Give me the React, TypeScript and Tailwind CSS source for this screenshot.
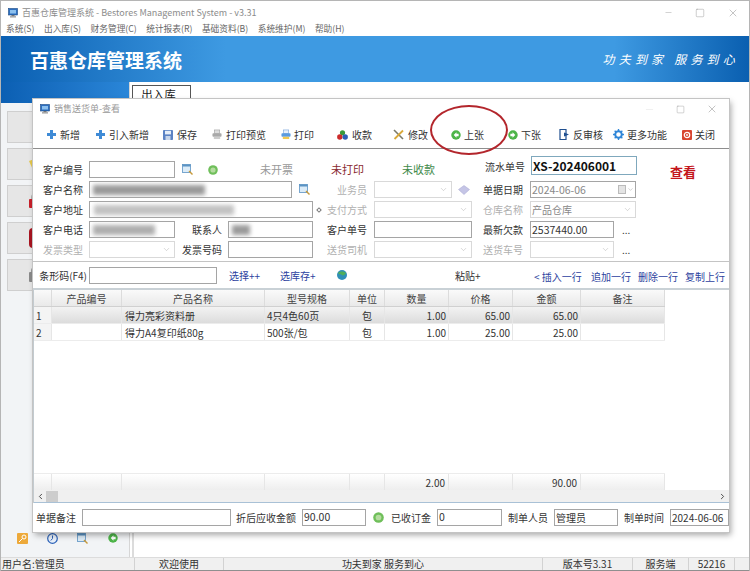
import type { ReactNode } from "react";
import { ChevronDown, ChevronLeft, ChevronRight, Minus, Square, X } from "lucide-react";

const font = { fontFamily: '"Noto Sans CJK SC", "Noto Sans", sans-serif' };

const gridCols =
  "grid grid-cols-[18px_70px_143px_85px_35px_64px_64px_68px_84px] w-[631px]";

const menus = ["系统(S)", "出入库(S)", "财务管理(C)", "统计报表(R)", "基础资料(B)", "系统维护(M)", "帮助(H)"];

function AppIcon() {
  return (
    <svg width="10" height="10" viewBox="0 0 10 10" className="shrink-0">
      <rect x="0.5" y="0.5" width="9" height="6.5" fill="#2d6fc0" stroke="#1b4a86" strokeWidth="0.6" />
      <rect x="2" y="2" width="6" height="3.5" fill="#8cc0ee" />
      <rect x="3.5" y="7" width="3" height="1.2" fill="#777" />
      <rect x="2" y="8.2" width="6" height="1.3" fill="#999" />
    </svg>
  );
}

function PlusIcon() {
  return (
    <svg width="9" height="9" viewBox="0 0 9 9">
      <path d="M3 0h3v3h3v3H6v3H3V6H0V3h3z" fill="#3f8bd6" />
    </svg>
  );
}

function SaveIcon() {
  return (
    <svg width="10" height="10" viewBox="0 0 10 10">
      <rect width="10" height="10" rx="0.8" fill="#5c83c4" />
      <rect x="2" y="0.8" width="6" height="3.6" fill="#e6eef8" />
      <rect x="2.5" y="6" width="5" height="4" fill="#c8d6ea" />
    </svg>
  );
}

function PrintIcon({ preview }: { preview?: boolean }) {
  return (
    <svg width="10" height="11" viewBox="0 0 11 11">
      <rect x="2.5" y="0.5" width="6" height="4" fill={preview ? "#ddd" : "#e8f0fa"} stroke={preview ? "#999" : "#6a9ad6"} strokeWidth="0.6" />
      <rect x="0.5" y="4" width="10" height="4" rx="1" fill={preview ? "#a9a9a9" : "#5a9be0"} />
      <rect x="2" y="8" width="7" height="2.5" fill={preview ? "#ccc" : "#f0c850"} />
    </svg>
  );
}

function BallsIcon() {
  return (
    <svg width="11" height="10" viewBox="0 0 11 10">
      <circle cx="5.5" cy="2.8" r="2.6" fill="#3a9a3c" />
      <circle cx="2.8" cy="7" r="2.7" fill="#cc2b2b" />
      <circle cx="8.2" cy="7" r="2.7" fill="#2d5fb8" />
    </svg>
  );
}

function ToolsIcon() {
  return (
    <svg width="11" height="11" viewBox="0 0 11 11">
      <path d="M1 1l9 9" stroke="#7a7a6a" strokeWidth="1.6" />
      <path d="M10 1.5L1.5 10" stroke="#d9a93a" strokeWidth="1.8" />
    </svg>
  );
}

function ArrowIcon({ dir }: { dir: "left" | "right" }) {
  return (
    <svg width="10" height="10" viewBox="0 0 11 11" className="shrink-0">
      <circle cx="5.5" cy="5.5" r="5.2" fill="#4db548" />
      <path
        d={dir === "left" ? "M6 2.5L3 5.5l3 3V6.8h2.4V4.2H6z" : "M5 2.5l3 3-3 3V6.8H2.6V4.2H5z"}
        fill="#fff"
      />
    </svg>
  );
}

function AuditIcon() {
  return (
    <svg width="11" height="11" viewBox="0 0 11 11">
      <path d="M1 .5h6v10H1z" fill="#fff" stroke="#1f4f8f" strokeWidth="1.2" />
      <path d="M5 3.5l5 2-5 2z" fill="#1f4f8f" />
    </svg>
  );
}

function GearIcon() {
  return (
    <svg width="11" height="11" viewBox="0 0 12 12">
      <circle cx="6" cy="6" r="3.6" fill="none" stroke="#2f86d8" strokeWidth="2.2" />
      <path d="M6 0v2.4M6 9.6V12M0 6h2.4M9.6 6H12M1.8 1.8l1.7 1.7M8.5 8.5l1.7 1.7M10.2 1.8L8.5 3.5M3.5 8.5l-1.7 1.7" stroke="#2f86d8" strokeWidth="1.5" />
    </svg>
  );
}

function CloseIcon() {
  return (
    <svg width="10" height="10" viewBox="0 0 10 10">
      <rect width="10" height="10" rx="1" fill="#d8452f" />
      <circle cx="5" cy="5" r="2.7" fill="none" stroke="#fff" strokeWidth="1.2" />
      <circle cx="5" cy="5" r="0.9" fill="#fff" />
    </svg>
  );
}

function SearchIcon() {
  return (
    <svg width="11" height="11" viewBox="0 0 11 11" className="shrink-0">
      <rect x="0.5" y="0.5" width="8" height="8" fill="#dcecf8" stroke="#5b93c4" strokeWidth="0.8" />
      <rect x="0.5" y="0.5" width="8" height="2" fill="#5b93c4" />
      <path d="M7 7l3.5 3.5" stroke="#c79a3a" strokeWidth="1.4" />
    </svg>
  );
}

function GreenDot({ size = 10 }: { size?: number }) {
  return (
    <svg width={size} height={size} viewBox="0 0 10 10" className="shrink-0">
      <circle cx="5" cy="5" r="4.8" fill="#6fbf5a" />
      <circle cx="5" cy="5" r="2.6" fill="#b5dca0" />
    </svg>
  );
}

function Tool({ icon, label, className }: { icon: ReactNode; label: string; className: string }) {
  return (
    <div className={`flex items-center shrink-0 ${className}`}>
      {icon}
      <span>{label}</span>
    </div>
  );
}

function Label({ children, className, off }: { children: ReactNode; className: string; off?: boolean }) {
  return (
    <div className={`shrink-0 text-right whitespace-nowrap ${off ? "text-[#b0b0b0]" : "text-[#333]"} ${className}`}>
      {children}
    </div>
  );
}

function Input({ className, children }: { className: string; children?: ReactNode }) {
  return (
    <div className={`h-[17px] shrink-0 border border-[#a5a5a5] bg-white flex items-center px-[1px] overflow-hidden whitespace-nowrap text-[10.5px] text-[#333] ${className}`}>
      {children}
    </div>
  );
}

function Select({ className, children }: { className: string; children?: ReactNode }) {
  return (
    <div className={`h-[17px] shrink-0 border border-[#d9d9d9] bg-white flex items-center justify-between px-[1px] overflow-hidden text-[10px] text-[#888] ${className}`}>
      <span>{children}</span>
      <ChevronDown size={9} strokeWidth={1} className="text-[#999] mr-[2px]" />
    </div>
  );
}

function Blur({ className }: { className: string }) {
  return <div className={`h-[10px] shrink-0 bg-[#9a9a9a] blur-[2px] ${className}`} />;
}

function Dots() {
  return <span className="ml-[8px] text-[10px] text-[#333] leading-none">...</span>;
}

const rowClass = "flex items-center h-[17px]";

function FormArea() {
  return (
    <div className="h-[113px] shrink-0 flex flex-col gap-[3px] pt-[12px] border-b border-[#c4c4c4] text-[10px]">
      <div className={rowClass}>
        <Label className="w-[50px]">客户编号</Label>
        <Input className="ml-[6px] w-[86px]" />
        <div className="ml-[7px]"><SearchIcon /></div>
        <div className="ml-[15px]"><GreenDot /></div>
        <span className="ml-[42px] w-[33px] text-[11px] text-[#9a9a9a] whitespace-nowrap">未开票</span>
        <span className="ml-[38px] w-[33px] text-[11px] text-[#8a2a32] whitespace-nowrap">未打印</span>
        <span className="ml-[38px] w-[34px] text-[11px] text-[#3f8a4a] whitespace-nowrap">未收款</span>
        <Label className="ml-[49px] w-[39px] mt-[-6px]">流水单号</Label>
        <div className="ml-[7px] mt-[-8px] h-[19px] w-[106px] shrink-0 border border-[#7fa8bd] flex items-center px-[1px] text-[12px] font-bold text-[#111]">
          XS-202406001
        </div>
        <span className="ml-[33px] mt-[6px] text-[13px] font-bold text-[#c4161c] whitespace-nowrap" style={{ fontFamily: '"Liberation Serif", "Noto Sans CJK SC", serif' }}>
          查看
        </span>
      </div>
      <div className={rowClass}>
        <Label className="w-[50px]">客户名称</Label>
        <Input className="ml-[6px] w-[203px]"><Blur className="ml-[2px] w-[112px]" /></Input>
        <div className="ml-[7px]"><SearchIcon /></div>
        <Label off className="w-[57px]">业务员</Label>
        <Select className="ml-[7px] w-[78px]" />
        <svg width="12" height="10" viewBox="0 0 12 10" className="ml-[6px] shrink-0">
          <path d="M6 .5l5.5 4L6 9.5.5 4.5z" fill="#c5c5e6" stroke="#a5a5d0" strokeWidth="0.5" />
        </svg>
        <Label className="w-[53px]">单据日期</Label>
        <div className="ml-[7px] h-[17px] w-[106px] shrink-0 border border-[#a5a5a5] flex items-center justify-between px-[1px] text-[10.5px] text-[#888]">
          <span>2024-06-06</span>
          <span className="flex items-center gap-[1px]">
            <span className="w-[8px] h-[9px] border border-[#bbb] bg-[#e4e4e4]" />
            <ChevronDown size={7} strokeWidth={1.5} className="text-[#999]" />
          </span>
        </div>
      </div>
      <div className={rowClass}>
        <Label className="w-[50px]">客户地址</Label>
        <Input className="ml-[6px] w-[224px]"><Blur className="ml-[3px] w-[140px] opacity-60" /></Input>
        <span className="ml-[4px] w-[4px] h-[4px] shrink-0 rotate-45 border border-[#777]" />
        <Label off className="w-[46px]">支付方式</Label>
        <Select className="ml-[7px] w-[98px]" />
        <Label off className="w-[51px]">仓库名称</Label>
        <Select className="ml-[7px] w-[106px]">产品仓库</Select>
      </div>
      <div className={rowClass}>
        <Label className="w-[50px]">客户电话</Label>
        <Input className="ml-[6px] w-[86px]"><Blur className="ml-[2px] w-[62px] opacity-80" /></Input>
        <Label className="w-[47px]">联系人</Label>
        <Input className="ml-[6px] w-[85px]"><Blur className="ml-[2px] w-[18px]" /></Input>
        <Label className="w-[54px]">客户单号</Label>
        <Input className="ml-[7px] w-[98px]" />
        <Label className="w-[51px]">最新欠款</Label>
        <Input className="ml-[7px] w-[84px]">2537440.00</Input>
        <Dots />
      </div>
      <div className={rowClass}>
        <Label off className="w-[50px]">发票类型</Label>
        <Select className="ml-[6px] w-[86px]" />
        <Label className="w-[47px]">发票号码</Label>
        <Input className="ml-[6px] w-[85px]" />
        <Label off className="w-[54px]">送货司机</Label>
        <Select className="ml-[7px] w-[98px]" />
        <Label off className="w-[51px]">送货车号</Label>
        <Select className="ml-[7px] w-[84px]" />
        <Dots />
      </div>
    </div>
  );
}

function BarcodeRow() {
  return (
    <div className="h-[28px] shrink-0 flex items-center text-[10px] border-b-2 border-[#c9d1d6]">
      <Label className="w-[54px]">条形码(F4)</Label>
      <Input className="ml-[2px] w-[128px]" />
      <span className="ml-[12px] w-[33px] whitespace-nowrap text-[#2c3f9e]">选择++</span>
      <span className="ml-[18px] w-[37px] whitespace-nowrap text-[#2c3f9e]">选库存+</span>
      <svg width="10" height="10" viewBox="0 0 10 10" className="ml-[20px] shrink-0">
        <circle cx="5" cy="5" r="5" fill="#2f8fb8" />
        <path d="M1 3c2-2 6-2 8 0-1 2-3 3-4 2S2 5 1 3z" fill="#4fae5a" />
      </svg>
      <span className="ml-[108px] w-[27px] whitespace-nowrap text-[#333]">粘贴+</span>
      <div className="ml-[52px] mt-[2px] flex gap-[7px] text-[#2c3f9e] whitespace-nowrap">
        <span className="w-[50px]">&lt; 插入一行</span>
        <span className="w-[40px]">追加一行</span>
        <span className="w-[40px]">删除一行</span>
        <span className="w-[40px]">复制上行</span>
      </div>
    </div>
  );
}

const headers = ["", "产品编号", "产品名称", "型号规格", "单位", "数量", "价格", "金额", "备注"];

const rows = [
  { no: "1", name: "得力亮彩资料册", spec: "4只4色60页", unit: "包", qty: "1.00", price: "65.00", total: "65.00", selected: true },
  { no: "2", name: "得力A4复印纸80g", spec: "500张/包", unit: "包", qty: "1.00", price: "25.00", total: "25.00", selected: false },
];

function Grid() {
  const cell = "border-r border-[#e6e6e6] h-full flex items-center px-[2px] whitespace-nowrap";
  return (
    <div className="flex-1 min-h-0 flex flex-col text-[10px] text-[#333] border-l border-[#c3cbd0]">
      <div className={`${gridCols} h-[17px] shrink-0 border-b border-[#d0d0d0] bg-linear-to-b from-[#fafafa] to-[#e9e9e9]`}>
        {headers.map((h, i) => (
          <div key={i} className="border-r border-[#dcdcdc] flex items-center justify-center text-[#444]">{h}</div>
        ))}
      </div>
      {rows.map((r) => (
        <div
          key={r.no}
          className={`${gridCols} h-[17px] shrink-0 border-b border-[#ececec] ${r.selected ? "bg-linear-to-b from-[#f3f3f3] to-[#dcdcdc]" : "bg-white"}`}
        >
          <div className={`${cell} bg-[#f4f4f4]`}>{r.no}</div>
          <div className={cell} />
          <div className={`${cell} pl-[3px]`}>{r.name}</div>
          <div className={cell}>{r.spec}</div>
          <div className={`${cell} justify-center`}>{r.unit}</div>
          <div className={`${cell} justify-end`}>{r.qty}</div>
          <div className={`${cell} justify-end`}>{r.price}</div>
          <div className={`${cell} justify-end`}>{r.total}</div>
          <div className={cell} />
        </div>
      ))}
      <div className="flex-1" />
      <div className={`${gridCols} h-[17px] shrink-0 bg-linear-to-b from-white to-[#eeeeee] border-t border-[#ececec]`}>
        <div className={cell} />
        <div className={cell} />
        <div className={cell} />
        <div className={cell} />
        <div className={cell} />
        <div className={`${cell} justify-end pr-[3px]`}>2.00</div>
        <div className={cell} />
        <div className={`${cell} justify-end pr-[3px]`}>90.00</div>
        <div className={cell} />
      </div>
      <div className="h-[13px] shrink-0 bg-[#f0f0f0] border-b border-[#a9c1d6] flex items-center">
        <ChevronLeft size={9} strokeWidth={2.5} className="ml-[2px] text-[#444]" />
        <div className="ml-[1px] w-[12px] h-[11px] bg-[#cdcdcd]" />
        <ChevronRight size={9} strokeWidth={2.5} className="ml-auto mr-[2px] text-[#444]" />
      </div>
    </div>
  );
}

function BottomRow() {
  return (
    <div className="h-[29px] shrink-0 flex items-center pb-[1px] text-[10px]">
      <Label className="w-[43px]">单据备注</Label>
      <Input className="ml-[6px] w-[149px]" />
      <Label className="w-[65px]">折后应收金额</Label>
      <Input className="ml-[6px] w-[64px]">90.00</Input>
      <div className="ml-[7px]"><GreenDot size={11} /></div>
      <Label className="w-[47px]">已收订金</Label>
      <Input className="ml-[6px] w-[65px]">0</Input>
      <Label className="w-[46px]">制单人员</Label>
      <Input className="ml-[6px] w-[64px] text-[10px]">管理员</Input>
      <Label className="w-[46px]">制单时间</Label>
      <Input className="ml-[6px] w-[59px] text-[10px]">2024-06-06</Input>
    </div>
  );
}

function Dialog() {
  return (
    <div className="absolute left-[32px] top-[98px] w-[696px] h-[433px] bg-white flex flex-col shadow-[0_0_0_1px_#c4c4c4,2px_3px_6px_rgba(0,0,0,0.35)]">
      <div className="h-[22px] shrink-0 flex items-center pl-[7px] pb-[2px] text-[9px] text-[#999]">
        <AppIcon />
        <span className="ml-[4px]">销售送货单-查看</span>
        <div className="ml-auto flex items-center gap-[21px] pr-[11px] text-[#888]">
          <Minus size={11} strokeWidth={1} className="text-[#ddd]" />
          <Square size={9} strokeWidth={1} />
          <X size={12} strokeWidth={1} />
        </div>
      </div>
      <div className="h-[28px] shrink-0 flex items-center border-b border-[#8e8e8e] text-[10px] text-[#333]">
        <Tool className="ml-[14px] w-[49px] gap-[4px]" icon={<PlusIcon />} label="新增" />
        <Tool className="w-[67px] gap-[4px]" icon={<PlusIcon />} label="引入新增" />
        <Tool className="w-[49px] gap-[4px]" icon={<SaveIcon />} label="保存" />
        <Tool className="w-[69px] gap-[4px]" icon={<PrintIcon preview />} label="打印预览" />
        <Tool className="w-[56px] gap-[3px]" icon={<PrintIcon />} label="打印" />
        <Tool className="w-[56px] gap-[4px]" icon={<BallsIcon />} label="收款" />
        <Tool className="w-[58px] gap-[4px]" icon={<ToolsIcon />} label="修改" />
        <Tool className="w-[57px] gap-[3px]" icon={<ArrowIcon dir="left" />} label="上张" />
        <Tool className="w-[51px] gap-[3px]" icon={<ArrowIcon dir="right" />} label="下张" />
        <Tool className="w-[54px] gap-[3px]" icon={<AuditIcon />} label="反审核" />
        <Tool className="w-[69px] gap-[3px]" icon={<GearIcon />} label="更多功能" />
        <Tool className="w-[40px] gap-[3px]" icon={<CloseIcon />} label="关闭" />
      </div>
      <FormArea />
      <BarcodeRow />
      <Grid />
      <BottomRow />
    </div>
  );
}

function SideButton({ children }: { children?: ReactNode }) {
  return (
    <div className="h-[32px] w-[112px] bg-[#e6e6e6] border border-[#cfcfcf] flex items-center pl-[21px]">
      {children}
    </div>
  );
}

function SidePanel() {
  return (
    <div className="w-[129px] shrink-0 flex flex-col bg-[#f2f4f6] border-r border-[#d6d6d6]">
      <div className="h-[21px] shrink-0 bg-linear-to-r from-[#0b5fb3] to-[#2a86d8]" />
      <div className="flex-1 flex flex-col gap-[5px] pl-[6px] pt-[8px]">
        <SideButton />
        <SideButton>
          <svg width="12" height="12" viewBox="0 0 12 12"><path d="M0 3l8-3 4 10-8 2z" fill="#e6c84a" /></svg>
        </SideButton>
        <SideButton>
          <svg width="12" height="14" viewBox="0 0 12 14"><rect y="5" width="12" height="9" rx="1" fill="#c8202a" /><path d="M3 5V3a3 3 0 016 0v2" fill="none" stroke="#999" strokeWidth="1.4" /></svg>
        </SideButton>
        <SideButton>
          <div className="w-[12px] h-[20px] rounded-sm bg-[#a81420]" />
        </SideButton>
        <SideButton>
          <svg width="12" height="14" viewBox="0 0 12 14"><rect y="4" width="12" height="10" rx="1" fill="#8a8a8a" /><path d="M3 4V2.5a3 3 0 016 0V4" fill="none" stroke="#777" strokeWidth="1.4" /></svg>
        </SideButton>
      </div>
      <div className="h-[26px] shrink-0 flex items-start pt-[2px] pl-[16px] gap-[19px]">
        <svg width="11" height="11" viewBox="0 0 11 11" className="shrink-0">
          <rect width="11" height="11" rx="1" fill="#eda93a" />
          <circle cx="7" cy="4" r="2" fill="none" stroke="#fff" strokeWidth="1" />
          <path d="M5.5 5.5L2 9" stroke="#fff" strokeWidth="1" />
        </svg>
        <svg width="11" height="11" viewBox="0 0 11 11" className="shrink-0">
          <circle cx="5.5" cy="5.5" r="4.8" fill="#e8f0fa" stroke="#2c62b8" strokeWidth="1.2" />
          <path d="M5.5 2.5v3L3.8 7.5" fill="none" stroke="#2c62b8" strokeWidth="1" />
        </svg>
        <SearchIcon />
        <div className="ml-[1px]"><ArrowIcon dir="left" /></div>
      </div>
    </div>
  );
}

function StatusBar() {
  const sep = "h-full flex items-center justify-center border-r border-[#d2d2d2] shrink-0 whitespace-nowrap";
  return (
    <div className="h-[14px] shrink-0 flex bg-[#f0f0f0] border-t border-[#dcdcdc] border-b border-b-[#8f8f8f] text-[10px] text-[#333] leading-none">
      <div className={`${sep} w-[134px] justify-start pl-[1px]`}>用户名:管理员</div>
      <div className={`${sep} w-[89px]`}>欢迎使用</div>
      <div className={`${sep} w-[319px]`}>功夫到家 服务到心</div>
      <div className={`${sep} w-[90px]`}>版本号3.31</div>
      <div className={`${sep} w-[56px]`}>服务端</div>
      <div className={`${sep} w-[46px]`}>52216</div>
    </div>
  );
}

export default function App() {
  return (
    <div className="relative w-[750px] h-[571px] overflow-hidden bg-white flex flex-col border-x border-t border-[#b5b5b5]" style={font}>
      <div className="h-[23px] shrink-0 flex items-center pl-[7px] text-[9px] text-[#8c8c8c]">
        <AppIcon />
        <span className="ml-[4px]">百惠仓库管理系统 - Bestores Management System - v3.31</span>
        <div className="ml-auto flex items-center gap-[22px] pr-[10px] text-[#8a8a8a]">
          <Minus size={9} strokeWidth={1} />
          <Square size={10} strokeWidth={1} />
          <X size={12} strokeWidth={1} />
        </div>
      </div>
      <div className="h-[12px] shrink-0 flex items-center gap-[9.5px] pl-[5px] pb-[2px] text-[8.7px] text-[#666] whitespace-nowrap">
        {menus.map((m) => (
          <span key={m}>{m}</span>
        ))}
      </div>
      <div className="h-[46px] shrink-0 flex items-center justify-between pl-[29px] pr-[10px] text-white bg-[linear-gradient(90deg,#0a5fb2_0%,#3e9ae2_30%,#3e9ae2_82%,#0a5fb0_100%)]">
        <span className="text-[19px] font-bold leading-none">百惠仓库管理系统</span>
        <span className="text-[12px] italic tracking-[4.2px] whitespace-nowrap">功夫到家 服务到心</span>
      </div>
      <div className="flex-1 min-h-0 flex">
        <SidePanel />
        <div className="flex-1 flex flex-col pl-[2px]">
          <div className="h-[21px] shrink-0 pt-[3px]">
            <div className="w-[59px] h-[18px] border border-b-0 border-[#555] flex items-center justify-center pr-[6px] text-[11.5px] text-[#222]">
              出入库
            </div>
          </div>
          <div className="flex-1 border-l-2 border-[#dcdcdc]" />
        </div>
      </div>
      <StatusBar />
      <Dialog />
      <div className="absolute left-[429px] top-[104px] w-[78px] h-[50px] rounded-[50%] border-2 border-[#b3262c]" />
    </div>
  );
}
